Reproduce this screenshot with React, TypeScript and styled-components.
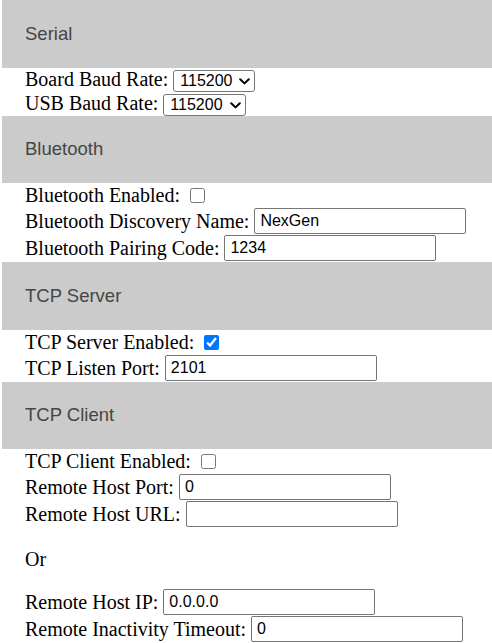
import React from 'react';
import styled, { createGlobalStyle } from 'styled-components';

// GLOBAL

const GlobalStyle = createGlobalStyle`
  body {
    margin: 0;
    background: #ffffff;
    font-family: "Liberation Serif", "Times New Roman", serif;
    font-size: 20px;
    color: #000000;
  }
`;

// STYLED COMPONENTS

const Page = styled.div`
  padding-left: 2px;
`;

const SectionHeader = styled.div`
  height: 67.5px;
  display: flex;
  align-items: center;
  padding-left: 23px;
  background: #cbcbcb;
  font-family: "Liberation Sans", Arial, sans-serif;
  font-size: 18.5px;
  color: #454545;
`;

const Row = styled.div<{ $height: number }>`
  height: ${(p) => p.$height}px;
  display: flex;
  align-items: flex-end;
  gap: 5px;
  padding-left: 23px;
  white-space: nowrap;
`;

const Label = styled.span`
  line-height: 23px;
  align-self: center;
`;

const Spacer = styled.p`
  margin: 20px 0 18px;
  padding-left: 23px;
  line-height: 23px;
`;

const SelectWrap = styled.span`
  position: relative;
  display: inline-flex;
  align-self: flex-end;
  svg {
    position: absolute;
    right: 5px;
    top: 8px;
    pointer-events: none;
  }
`;

const Select = styled.select<{ $width: number }>`
  appearance: none;
  width: ${(p) => p.$width}px;
  height: 22px;
  box-sizing: border-box;
  padding: 0 0 0 6px;
  border: 1px solid #767676;
  border-radius: 3px;
  background: #ffffff;
  font-family: "Liberation Sans", Arial, sans-serif;
  font-size: 16px;
  color: #000000;
`;

const TextInput = styled.input`
  width: 212px;
  height: 26px;
  box-sizing: border-box;
  padding: 0 5px;
  margin-bottom: 1px;
  border: 1px solid #767676;
  border-radius: 2px;
  font-family: "Liberation Sans", Arial, sans-serif;
  font-size: 16px;
  color: #000000;
`;

const Check = styled.input`
  width: 15px;
  height: 15px;
  margin: 0 0 0 5px;
  align-self: center;
  accent-color: #0075ff;
`;

const Chevron = () => (
  <svg width="11" height="7" viewBox="0 0 11 7">
    <path d="M1.2 1.2 L5.5 5.4 L9.8 1.2" fill="none" stroke="#000" strokeWidth="2" strokeLinecap="round" strokeLinejoin="round" />
  </svg>
);

const BaudSelect = ({ width }: { width: number }) => (
  <SelectWrap>
    <Select $width={width} defaultValue="115200">
      <option value="9600">9600</option>
      <option value="57600">57600</option>
      <option value="115200">115200</option>
    </Select>
    <Chevron />
  </SelectWrap>
);

const InputRow = ({ label, value }: { label: string; value: string }) => (
  <Row $height={27}>
    <Label>{label}</Label>
    <TextInput type="text" defaultValue={value} />
  </Row>
);

const CheckRow = ({ label, checked }: { label: string; checked: boolean }) => (
  <Row $height={25}>
    <Label>{label}</Label>
    <Check type="checkbox" defaultChecked={checked} />
  </Row>
);

const App = () => {
  return (
    <>
      <GlobalStyle />
      <Page>
        <SectionHeader>Serial</SectionHeader>
        <Row $height={24}>
          <Label>Board Baud Rate:</Label>
          <BaudSelect width={82} />
        </Row>
        <Row $height={24}>
          <Label>USB Baud Rate:</Label>
          <BaudSelect width={83} />
        </Row>

        <SectionHeader>Bluetooth</SectionHeader>
        <CheckRow label="Bluetooth Enabled:" checked={false} />
        <InputRow label="Bluetooth Discovery Name:" value="NexGen" />
        <InputRow label="Bluetooth Pairing Code:" value="1234" />

        <SectionHeader>TCP Server</SectionHeader>
        <CheckRow label="TCP Server Enabled:" checked={true} />
        <InputRow label="TCP Listen Port:" value="2101" />

        <SectionHeader>TCP Client</SectionHeader>
        <CheckRow label="TCP Client Enabled:" checked={false} />
        <InputRow label="Remote Host Port:" value="0" />
        <InputRow label="Remote Host URL:" value="" />
        <Spacer>Or</Spacer>
        <InputRow label="Remote Host IP:" value="0.0.0.0" />
        <InputRow label="Remote Inactivity Timeout:" value="0" />
      </Page>
    </>
  );
};

export default App;
